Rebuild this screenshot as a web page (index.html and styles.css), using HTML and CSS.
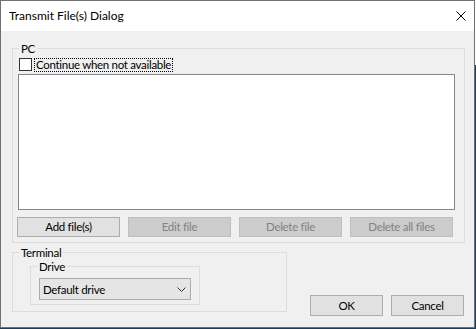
FILE: index.html
```html
<!DOCTYPE html>
<html>
<head>
<meta charset="utf-8">
<title>Transmit File(s) Dialog</title>
<link rel="stylesheet" href="styles.css">
</head>
<body>
<div class="window">
  <div class="titlebar">
    <span class="title">Transmit File(s) Dialog</span>
    <svg class="close" width="10" height="10" viewBox="0 0 10 10"><path d="M0.5 0.5 L9.5 9.5 M9.5 0.5 L0.5 9.5" stroke="#000" stroke-width="1" fill="none"/></svg>
  </div>
  <div class="client">
    <div class="group pc">
      <span class="legend">PC</span>
      <div class="check-row">
        <span class="checkbox"></span>
        <span class="check-label">Continue when not available</span>
      </div>
      <div class="listbox"></div>
      <div class="btn-row">
        <button class="btn wide">Add file(s)</button>
        <button class="btn wide" disabled>Edit file</button>
        <button class="btn wide" disabled>Delete file</button>
        <button class="btn wide" disabled>Delete all files</button>
      </div>
    </div>
    <div class="bottom-row">
      <div class="group terminal">
        <span class="legend">Terminal</span>
        <div class="group drive">
          <span class="legend">Drive</span>
          <div class="combo">
            <span class="combo-text">Default drive</span>
            <svg class="chevron" width="9" height="5" viewBox="0 0 9 5"><path d="M0.5 0.5 L4.5 4.5 L8.5 0.5" stroke="#333" stroke-width="1" fill="none"/></svg>
          </div>
        </div>
      </div>
      <div class="dlg-buttons">
        <button class="btn dlg">OK</button>
        <button class="btn dlg">Cancel</button>
      </div>
    </div>
  </div>
</div>
</body>
</html>
```
FILE: styles.css
```css
html {
  background: linear-gradient(#ffffff 65px, #1e3c5e 65px);
  height: 100%;
}
body {
  margin: 0;
  font-family: "Segoe UI", Lato, "Noto Sans", sans-serif;
  font-size: 11.5px;
  letter-spacing: -0.3px;
  color: #000;
}
.window {
  width: 475px;
  height: 328px;
  box-sizing: border-box;
  border: 1px solid #707070;
  display: flex;
  flex-direction: column;
  background: #f0f0f0;
}
.titlebar {
  height: 30px;
  flex: none;
  background: #fff;
  display: flex;
  align-items: center;
  justify-content: space-between;
  padding: 0 8px 0 8px;
}
.title {
  font-size: 12px;
  line-height: 16px;
  letter-spacing: 0;
}
.close {
  display: block;
}
.client {
  flex: 1;
  padding: 17px 0 0 11px;
}
.group {
  position: relative;
  box-sizing: border-box;
  border: 1px solid #dcdcdc;
}
.legend {
  position: absolute;
  top: -7px;
  left: 6px;
  padding: 0 2px;
  line-height: 13px;
  background: #f0f0f0;
  white-space: nowrap;
}
.pc {
  width: 453px;
  height: 195px;
  padding: 9px 0 0 5px;
}
.check-row {
  display: flex;
  align-items: flex-start;
  height: 14px;
  margin-left: 1px;
}
.checkbox {
  width: 13px;
  height: 13px;
  box-sizing: border-box;
  border: 1px solid #333;
  background: #fff;
  flex: none;
}
.check-label {
  margin-left: 2px;
  height: 14px;
  box-sizing: border-box;
  border: 1px dotted #000;
  padding: 0 1px;
  line-height: 12px;
  white-space: nowrap;
}
.listbox {
  margin-top: 2px;
  width: 437px;
  height: 136px;
  box-sizing: border-box;
  border: 1px solid #828790;
  background: #fff;
}
.btn-row {
  display: flex;
  gap: 8px;
  margin-top: 7px;
  margin-left: -1px;
}
.btn {
  font-family: inherit;
  font-size: 11.5px;
  letter-spacing: -0.3px;
  color: #000;
  background: #e1e1e1;
  border: 1px solid #adadad;
  box-sizing: border-box;
  padding: 0;
  margin: 0;
  line-height: 16px;
}
.btn:disabled {
  background: #cccccc;
  border-color: #bfbfbf;
  color: #838383;
}
.wide {
  width: 103px;
  height: 20px;
}
.bottom-row {
  display: flex;
  align-items: flex-start;
  margin-top: 9px;
}
.terminal {
  width: 275px;
  height: 60px;
  padding: 13px 0 0 17px;
}
.drive {
  width: 170px;
  height: 39px;
  padding: 11px 0 0 8px;
}
.combo {
  width: 152px;
  height: 22px;
  box-sizing: border-box;
  border: 1px solid #acacac;
  background: #e5e5e5;
  display: flex;
  align-items: center;
  justify-content: space-between;
  padding: 0 4px 0 3px;
}
.chevron {
  display: block;
}
.dlg-buttons {
  display: flex;
  gap: 8px;
  margin-left: 23px;
  margin-top: 43px;
}
.dlg {
  width: 73px;
  height: 21px;
}
```
